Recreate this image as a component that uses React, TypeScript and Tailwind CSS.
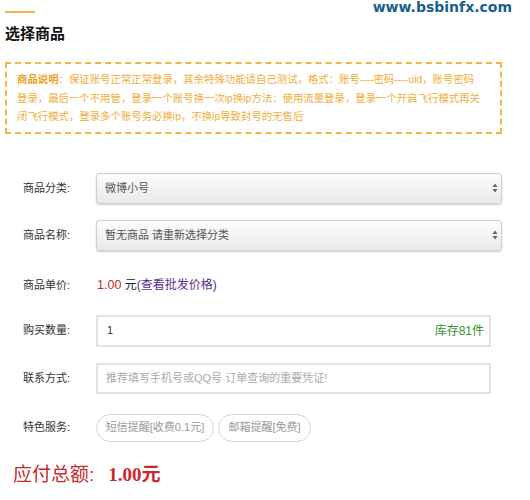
import React from "react";

const FONT = { fontFamily: '"Liberation Sans", "Noto Sans CJK SC", sans-serif' };

function Arrows() {
  return (
    <svg width="6" height="10" viewBox="0 0 6 10" className="shrink-0">
      <path d="M3 0.5 L5.5 4 L0.5 4 Z" fill="#666" />
      <path d="M3 9.5 L5.5 6 L0.5 6 Z" fill="#666" />
    </svg>
  );
}

function Label({ children }: { children: React.ReactNode }) {
  return <div className="w-[73px] shrink-0 ml-[18px] text-[11px] text-[#333]">{children}</div>;
}

function FakeSelect({ text }: { text: string }) {
  return (
    <div className="w-[406px] h-[31px] flex items-center justify-between pl-[8px] pr-[3px] rounded-[3px] border border-[#cfcfcf] bg-gradient-to-b from-[#fdfdfd] to-[#e9e9e9] shadow-[0_1px_2px_rgba(0,0,0,0.18)] text-[11px] text-[#555]">
      <span>{text}</span>
      <Arrows />
    </div>
  );
}

export default function App() {
  return (
    <div className="relative w-[530px] h-[500px] bg-white px-[5px] overflow-hidden" style={FONT}>
      <div
        className="absolute top-[-1px] right-[18px] text-[14px] leading-[17px] font-bold text-[#1b5e8c]"
        style={{ fontFamily: '"DejaVu Sans", sans-serif' }}
      >
        www.bsbinfx.com
      </div>

      <div className="pt-[11px]">
        <div className="w-[30px] h-[2px] bg-[#f2b452]" />
      </div>

      <div className="mt-[11px] text-[15px] leading-[20px] font-bold text-[#111]">选择商品</div>

      <div className="mt-[18px] w-[497px] border-2 border-dashed border-[#f4b545] pl-[10px] pt-[7px] pb-[5px] text-[10.4px] leading-[18.5px] text-[#f3ad3a]">
        <div className="whitespace-nowrap">
          <span className="font-bold text-[#eea020]">商品说明</span>：保证账号正常正常登录，其余特殊功能请自己测试，格式：账号----密码----uid，账号密码
        </div>
        <div className="whitespace-nowrap">登录，最后一个不用管，登录一个账号换一次ip换ip方法：使用流量登录，登录一个开启飞行模式再关</div>
        <div className="whitespace-nowrap">闭飞行模式，登录多个账号务必换ip，不换ip导致封号的无售后</div>
      </div>

      <div className="mt-[39px] flex items-center">
        <Label>商品分类:</Label>
        <FakeSelect text="微博小号" />
      </div>

      <div className="mt-[16px] flex items-center">
        <Label>商品名称:</Label>
        <FakeSelect text="暂无商品 请重新选择分类" />
      </div>

      <div className="mt-[20px] h-[30px] flex items-center">
        <Label>商品单价:</Label>
        <div className="text-[12px] pl-[1px]">
          <span className="text-[12.5px] text-[#c8262b]">1.00</span>
          <span className="text-[#222]"> 元</span>
          <span className="text-[#5a2f8f]">(查看批发价格)</span>
        </div>
      </div>

      <div className="mt-[14px] flex items-center">
        <Label>购买数量:</Label>
        <div className="w-[395px] h-[32px] flex items-center justify-between pl-[9px] pr-[5px] border-2 border-[#e3e3e3] bg-white">
          <span className="text-[11px] text-[#333]">1</span>
          <span className="text-[12px] text-[#2f952f]">库存81件</span>
        </div>
      </div>

      <div className="mt-[16px] flex items-center">
        <Label>联系方式:</Label>
        <div className="w-[395px] h-[31px] flex items-center pl-[8px] border-2 border-[#e3e3e3] bg-white">
          <span className="text-[11px] text-[#aaa]">推荐填写手机号或QQ号 订单查询的重要凭证!</span>
        </div>
      </div>

      <div className="mt-[20px] flex items-center">
        <Label>特色服务:</Label>
        <div className="flex gap-[4px]">
          <div className="w-[118px] h-[28px] flex items-center justify-center rounded-full border border-[#d5d5d5] text-[11px] text-[#9a9a9a]">
            短信提醒[收费0.1元]
          </div>
          <div className="w-[93px] h-[28px] flex items-center justify-center rounded-full border border-[#d5d5d5] text-[11px] text-[#9a9a9a]">
            邮箱提醒[免费]
          </div>
        </div>
      </div>

      <div className="mt-[21px] h-[26px] flex items-center pl-[8px] text-[#c62a2c]">
        <span className="text-[19px]">应付总额:</span>
        <span
          className="ml-[14px] text-[19px] font-bold"
          style={{ fontFamily: '"Liberation Serif", "Noto Sans CJK SC", serif' }}
        >
          1.00元
        </span>
      </div>
    </div>
  );
}
